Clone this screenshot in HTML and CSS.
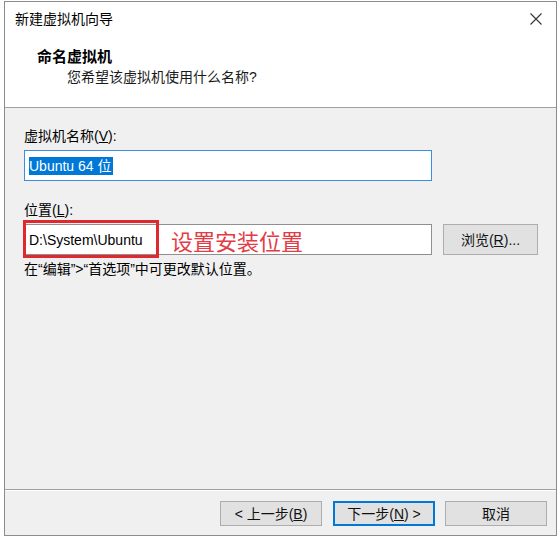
FILE: index.html
```html
<!DOCTYPE html>
<html lang="zh-CN">
<head>
<meta charset="utf-8">
<title>新建虚拟机向导</title>
<link rel="stylesheet" href="styles.css">
</head>
<body>
<div class="window">
  <div class="titlebar">
    <span class="title">新建虚拟机向导</span>
    <svg class="close" width="12" height="12" viewBox="0 0 12 12"><path d="M0.5 0.5 L11.5 11.5 M11.5 0.5 L0.5 11.5" stroke="#333" stroke-width="1.1" fill="none"/></svg>
  </div>
  <div class="header">
    <div class="heading">命名虚拟机</div>
    <div class="subheading">您希望该虚拟机使用什么名称?</div>
  </div>
  <div class="content">
    <div class="label">虚拟机名称(<u>V</u>):</div>
    <div class="row">
      <div class="input focused"><span class="selected">Ubuntu 64 位</span></div>
    </div>
    <div class="label second">位置(<u>L</u>):</div>
    <div class="row">
      <div class="input location">
        <span>D:\System\Ubuntu</span>
        <div class="mark"></div>
        <span class="annotation">设置安装位置</span>
      </div>
      <div class="button browse">浏览(<u>R</u>)...</div>
    </div>
    <div class="note">在“编辑”&gt;“首选项”中可更改默认位置。</div>
  </div>
  <div class="footer">
    <div class="button nav">&lt; 上一步(<u>B</u>)</div>
    <div class="button nav default">下一步(<u>N</u>) &gt;</div>
    <div class="button nav">取消</div>
  </div>
</div>
</body>
</html>
```

FILE: styles.css
```css
html, body {
  margin: 0;
  padding: 0;
  background: #ffffff;
}
body {
  font-family: "Liberation Sans", "Noto Sans CJK SC", sans-serif;
  font-size: 14px;
  color: #000;
}
.window {
  margin: 1px 0 0 4px;
  width: 551px;
  height: 533px;
  border: 1px solid #8c8c8c;
  display: flex;
  flex-direction: column;
  background: #f0f0f0;
}
.titlebar {
  height: 34px;
  background: #fff;
  display: flex;
  align-items: center;
  justify-content: space-between;
  padding: 0 14px 0 10px;
}
.title {
  line-height: 20px;
}
.close {
  display: block;
  margin-top: -1px;
}
.header {
  height: 72px;
  background: #fff;
  border-bottom: 1px solid #a0a0a0;
  padding-top: 11px;
  box-sizing: border-box;
}
.heading {
  font-weight: bold;
  font-size: 15px;
  line-height: 20px;
  padding-left: 32px;
}
.subheading {
  line-height: 20px;
  padding-left: 62px;
  color: #1a1a1a;
}
.content {
  flex: 1;
  padding: 18px 0 0 19px;
  border-bottom: 1px solid #a0a0a0;
}
.label {
  line-height: 20px;
  margin-bottom: 4px;
}
.label.second {
  margin-top: 19px;
}
.row {
  display: flex;
  align-items: flex-start;
  gap: 11px;
}
.input {
  width: 408px;
  height: 31px;
  box-sizing: border-box;
  background: #fff;
  border: 1px solid #8f8f8f;
  display: flex;
  align-items: center;
  padding-left: 4px;
  position: relative;
  line-height: 18px;
}
.input.focused {
  border-color: #3d8ee0;
}
.selected {
  background: #0078d7;
  color: #fff;
  padding: 0 1px 0 0;
}
.mark {
  position: absolute;
  left: -2px;
  top: -5px;
  width: 130px;
  height: 32px;
  border: 3px solid #e0282e;
}
.annotation {
  position: absolute;
  left: 146px;
  top: 2px;
  font-size: 22px;
  line-height: 26px;
  color: #e23c46;
  font-family: "Noto Sans CJK SC", sans-serif;
}
.button {
  background: #e1e1e1;
  border: 1px solid #adadad;
  box-sizing: border-box;
  display: flex;
  align-items: center;
  justify-content: center;
  line-height: 18px;
  color: #111;
}
.browse {
  width: 95px;
  height: 31px;
}
.note {
  margin-top: 4px;
  line-height: 20px;
}
.footer {
  border-top: 1px solid #fff;
  height: 45px;
  box-sizing: border-box;
  display: flex;
  justify-content: flex-end;
  align-items: flex-start;
  gap: 10px;
  padding: 10px 9px 0 0;
}
.nav {
  width: 102px;
  height: 25px;
}
.nav:first-child {
  margin-right: 1px;
}
.default {
  border-color: #0078d7;
  box-shadow: inset 0 0 0 1px #0078d7;
}
```
